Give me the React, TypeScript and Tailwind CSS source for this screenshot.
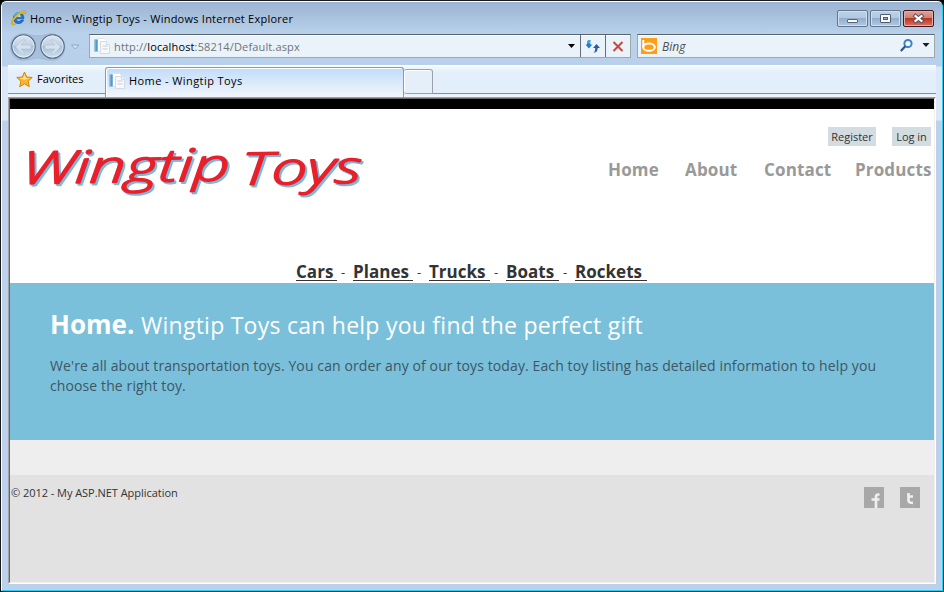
import React from "react";

const font = "font-['Open_Sans','Noto_Sans',sans-serif]";

function IeLogo() {
  return (
    <svg width="18" height="17" viewBox="0 0 18 17" className="shrink-0">
      <path d="M13.8 9.8H6.2c.2 3 3.6 3.5 4.8 1.3h2.7c-2.2 5.5-10.300 4.500-10.300-2.100 0-7.200 11.200-7.500 10.400.8z" fill="#1c79cd" stroke="#0d4f9d" strokeWidth=".6" />
      <path d="M6.300 7.700c.5-2.700 4.100-2.700 4.600 0z" fill="#e8f5ff" />
      <path d="M4.200 7.500C5 4 9 3 11.500 4.500" fill="none" stroke="#53bdf2" strokeWidth="1.400" />
      <path d="M1.800 15.500C-.6 13 5 5.500 11 2.700c3-1.400 5-1.200 5 .5 0 .8-.3 1.400-.7 2 .1-1.500-1.100-1.900-3.500-.7C7 7 2.300 12.200 2.800 14.500c.4 1.300 2.300.5 3.500-.3-1.500 1.500-3.500 2.300-4.500 1.300z" fill="#f6b90c" stroke="#b98208" strokeWidth=".3" />
    </svg>
  );
}

function PageIcon() {
  return (
    <svg width="16" height="16" viewBox="0 0 16 16" className="shrink-0">
      <path d="M3.500.5h7l2 2v11h-9z" fill="#fff" stroke="#dde4ea" />
      <path d="M.5 1.500h3.200v12H.5z" fill="#4e9bd0" />
      <path d="M.5 1.500h1v12h-1z" fill="#91c6e6" />
      <path d="M6.500 3.500h6l3 3v9h-9z" fill="#f6f9fb" stroke="#d3dae1" />
      <path d="M12.500 3.500v3h3" fill="#fff" stroke="#d3dae1" />
      <path d="M8.500 8h5M8.500 11h5" stroke="#c5cdd6" />
    </svg>
  );
}

function NavButtons() {
  return (
    <svg width="70" height="28" viewBox="0 0 70 28" className="shrink-0">
      <defs>
        <linearGradient id="orb" x1="0" y1="0" x2="0" y2="1">
          <stop offset="0" stopColor="#dbe7f3" />
          <stop offset=".48" stopColor="#bdcfe2" />
          <stop offset=".5" stopColor="#a7bfd6" />
          <stop offset="1" stopColor="#cfe3f2" />
        </linearGradient>
      </defs>
      <path d="M13 .7c6 0 9 2.200 14.500 2.200S36 .7 42 .7c17 0 17 26.600 0 26.600-6 0-9-2.200-14.500-2.200S19 27.300 13 27.300c-17 0-17-26.600 0-26.600z" fill="#a9c0dc" stroke="#9bb2ce" strokeWidth=".7" />
      {[13.5, 42.5].map((x) => (
        <g key={x}>
          <circle cx={x} cy="13.500" r="11.700" fill="url(#orb)" stroke="#596b80" strokeWidth="1.200" />
          <circle cx={x} cy="13.500" r="10.600" fill="none" stroke="#e6eff8" strokeWidth=".8" />
        </g>
      ))}
      <path d="M5.500 14l7-7h3l-4.500 5h10v4H11l4.500 5h-3z" fill="#d5e2ee" stroke="#b3c5d6" strokeWidth=".8" />
      <path d="M50.500 14l-7-7h-3l4.500 5H35v4h10l-4.500 5h3z" fill="#d5e2ee" stroke="#b3c5d6" strokeWidth=".8" />
      <path d="M61.500 12h7.400l-3.700 4z" fill="#d3e1f1" stroke="#8da5c0" strokeWidth=".9" />
    </svg>
  );
}

function CaptionButton({ kind }: { kind: "min" | "max" | "close" }) {
  const close = kind === "close";
  return (
    <div
      className={
        close
          ? "h-[17px] w-[31px] rounded-[2px] border border-[#47141e] bg-[linear-gradient(#dda39a_0%,#cf7e70_48%,#b93622_50%,#d77560_100%)] shadow-[inset_0_0_0_1px_#e4aea2]"
          : "h-[17px] w-[31px] rounded-[2px] border border-[#62758f] bg-[linear-gradient(#bdd0e6_0%,#b1c8e0_48%,#91aecd_50%,#b2cbe5_100%)] shadow-[inset_0_0_0_1px_#d1e0f0]"
      }
    >
      <svg width="29" height="15" viewBox="0 0 29 15">
        {kind === "min" && <rect x="9.500" y="8.500" width="10" height="3" rx=".5" fill="#fafafa" stroke="#5c6475" />}
        {kind === "max" && (
          <g stroke="#535b70" fill="#fafafa">
            <rect x="9.500" y="3.500" width="10" height="8" rx=".5" />
            <rect x="12.500" y="6.500" width="4" height="2" fill="#9ab2ce" />
          </g>
        )}
        {close && (
          <g>
            <path d="M11.500 5l6 5M17.500 5l-6 5" stroke="#514b5b" strokeWidth="4" strokeLinecap="square" />
            <path d="M11.500 5l6 5M17.500 5l-6 5" stroke="#fff" strokeWidth="2.200" strokeLinecap="square" />
          </g>
        )}
      </svg>
    </div>
  );
}

function TitleBar() {
  return (
    <div className="flex h-[31px] items-start pl-[8px] pr-[8px] pt-[7px]">
      <IeLogo />
      <span className="ml-[2px] w-[270px] whitespace-nowrap text-[11px] leading-[20px] tracking-[0.24px] text-black">
        Home - Wingtip Toys - Windows Internet Explorer
      </span>
      <div className="ml-auto flex gap-[2px] pt-px">
        <CaptionButton kind="min" />
        <CaptionButton kind="max" />
        <CaptionButton kind="close" />
      </div>
    </div>
  );
}

const fieldClass = "flex h-[24px] items-center border border-[#99aaa9] border-t-[#56646e] bg-[#eaf2fa] shadow-[inset_0_1px_0_#fff]";

function AddressRow() {
  return (
    <div className="flex h-[32px] items-start pl-[8px] pr-[7px]">
      <NavButtons />
      <div className={fieldClass + " ml-[9px] mt-px w-[542px] pl-[4px]"}>
        <PageIcon />
        <span className="ml-[4px] pt-[2px] text-[11px] leading-[20px] tracking-[0.14px] text-[#6f7479]">
          http://<span className="text-black">localhost</span>:58214/Default.aspx
        </span>
        <svg width="58" height="22" viewBox="0 0 58 22" className="ml-auto mr-[4px]">
          <path d="M0 9h7l-3.500 4z" fill="#000" />
          <path d="M12.500 0v22M37.500 0v22" stroke="#666b79" />
          <path d="M22.500 5c-3.500 0-3.500 2-3.500 4.500h-1.500l3.400 4 3.400-4h-2c0-2-.3-3.300.2-4.500z" fill="#2477cb" />
          <path d="M28.500 9l-3.500 4h2.200c0 2-.2 3.500-1.700 4.700 3.400-.2 4.100-2 4.100-4.700H32z" fill="#265cab" />
          <path d="M22.500 5c-3.500 0-3.500 2-3.500 3.500h3.100c0-1.500 0-2.500.4-3.500z" fill="#38b0df" />
          <path d="M45.500 7l9 9M54.500 7l-9 9" stroke="#cc4440" strokeWidth="2" />
        </svg>
      </div>
      <div className={fieldClass + " ml-auto mt-px w-[298px] pl-[3px]"}>
        <svg width="16" height="16" viewBox="0 0 16 16">
          <rect width="16" height="16" fill="#ff9d16" />
          <path d="M2.300 2v7.500" stroke="#fff" strokeWidth="2" />
          <ellipse cx="8" cy="9.200" rx="5.800" ry="3.600" fill="none" stroke="#fff" strokeWidth="2" />
        </svg>
        <span className="ml-[5px] pt-[2px] text-[12px] italic text-[#4c5158]">Bing</span>
        <svg width="33" height="16" viewBox="0 0 33 16" className="ml-auto mr-[2px]">
          <circle cx="9" cy="5.500" r="3.600" fill="#f3faff" stroke="#3a82c8" strokeWidth="2" />
          <path d="M6.300 8.300l-4.500 4.700" stroke="#344f8d" strokeWidth="2.200" />
          <path d="M23.500 5h7L27 9z" fill="#1c1c1c" />
        </svg>
      </div>
    </div>
  );
}

function TabRow() {
  return (
    <div className="ml-[6px] mr-[6px] flex h-[32px] border-t border-[#fff] bg-[linear-gradient(#f3f9ff_0,#e2eefa_7px,#e2eefa_28px,#eff4f9_29px)]">
      <div className="flex h-[28px] w-[97px] border-b border-[#8792a1] pl-[8px] pt-[5px]">
        <svg width="17" height="17" viewBox="0 0 17 17">
          <path d="M8.500 1l2.200 5 5.500.500-4.100 3.700 1.200 5.500-4.800-2.900-4.800 2.900 1.200-5.500L.8 6.500 6.300 6z" fill="#ffb52a" stroke="#d48511" strokeLinejoin="round" />
          <path d="M8.500 3.500L9.900 7l3.300.3-4.700 1.500-4.700-1.500L7.100 7z" fill="#ffe58a" />
        </svg>
        <span className="ml-[4px] text-[11px] leading-[16px] text-black">Favorites</span>
      </div>
      <div className="mt-[1px] flex h-[30px] w-[299px] rounded-t-[3px] border border-b-0 border-[#9298a3] bg-[linear-gradient(#c1dcf9,#f2f6fc)] pl-[3px] pt-[5px] shadow-[inset_1px_1px_0_#fff]">
        <PageIcon />
        <span className="ml-[4px] text-[11px] leading-[16px] tracking-[0.42px] text-black">Home - Wingtip Toys</span>
      </div>
      <div className="mt-[3px] h-[25px] w-[29px] rounded-t-[3px] rounded-bl-[3px] border border-l-0 border-[#9aa1aa] bg-[#e4effa] shadow-[inset_1px_1px_0_#fff]" />
      <div className="h-[28px] flex-1 border-b border-[#8792a1]" />
    </div>
  );
}

function Logo() {
  return (
    <svg
      width="370"
      height="90"
      viewBox="0 0 370 90"
      className="font-['Open_Sans',sans-serif] text-[45px] font-light italic drop-shadow-[2px_2px_0_#7cb7dc]"
      fill="#e9202b"
      stroke="#e9202b"
      strokeWidth="1.600"
      strokeLinejoin="round"
      strokeLinecap="round"
    >
      <text transform="translate(11 54) rotate(-1) skewX(-4)" textLength="208" lengthAdjust="spacingAndGlyphs">
        Wingtip
      </text>
      <text transform="translate(230 55) rotate(-1) skewX(-4)" textLength="121" lengthAdjust="spacingAndGlyphs">
        Toys
      </text>
    </svg>
  );
}

function CategoryLink({ name, width }: { name: string; width: string }) {
  return (
    <span className={"h-[19px] border-b border-[#333] text-[17px] font-bold leading-[20px] tracking-[0.02px] " + width}>{name}</span>
  );
}

function Dash() {
  return <span className="w-[16px] pl-[4px] text-[13px] leading-[21px]">-</span>;
}

function Header() {
  return (
    <header className="flex h-[184px] flex-col border-t-[10px] border-black bg-white">
      <div className="flex h-[148px] shrink-0 justify-between">
        <div className="pt-[21px]">
          <Logo />
        </div>
        <div className="pr-[3px] pt-[18px]">
          <div className="flex justify-end gap-[16px] text-[11px] leading-[19px] text-[#333]">
            <span className="h-[19px] w-[48px] bg-[#d3dce0] text-center">Register</span>
            <span className="h-[19px] w-[39px] bg-[#d3dce0] text-center">Log in</span>
          </div>
          <nav className="mt-[12px] flex whitespace-nowrap text-[17px] font-bold leading-[24px] tracking-[0.15px] text-[#999]">
            <span className="w-[77px]">Home</span>
            <span className="w-[79px]">About</span>
            <span className="w-[91px]">Contact</span>
            <span className="w-[76px]">Products</span>
          </nav>
        </div>
      </div>
      <div className="flex h-[26px] items-start pl-[286px] pt-[5px] text-[#333]">
        <CategoryLink name="Cars" width="w-[41px]" />
        <Dash />
        <CategoryLink name="Planes" width="w-[60px]" />
        <Dash />
        <CategoryLink name="Trucks" width="w-[61px]" />
        <Dash />
        <CategoryLink name="Boats" width="w-[53px]" />
        <Dash />
        <CategoryLink name="Rockets" width="w-[72px]" />
      </div>
    </header>
  );
}

function Hero() {
  return (
    <section className="h-[157px] bg-[#7ac0da] pl-[40px] pt-[24px]">
      <h1 className="flex h-[35px] items-baseline whitespace-nowrap text-white">
        <span className="w-[91px] text-[26px] font-bold leading-[35px]">Home.</span>
        <span className="text-[23px] tracking-[0.25px]">Wingtip Toys can help you find the perfect gift</span>
      </h1>
      <p className="mt-[14px] whitespace-nowrap text-[14px] leading-[20px] tracking-[0.11px] text-[#3e5667]">
        We're all about transportation toys. You can order any of our toys today. Each toy listing has detailed information to help you
        <br />
        choose the right toy.
      </p>
    </section>
  );
}

function Footer() {
  return (
    <footer className="flex h-[107px] justify-between bg-[#e2e2e2] pr-[14px] pt-[10px]">
      <span className="pl-px text-[11px] leading-[16px] tracking-[-0.04px] text-[#333]">© 2012 - My ASP.NET Application</span>
      <div className="flex gap-[16px] pt-[2px]">
        <svg width="20" height="21" viewBox="0 0 20 21">
          <rect width="20" height="21" fill="#a8a8a8" />
          <path d="M15.500 7.500h-1.200c-2 0-2.300 1-2.300 2.500V21M7.500 12.500h8" fill="none" stroke="#efefef" strokeWidth="2.700" />
        </svg>
        <svg width="20" height="21" viewBox="0 0 20 21">
          <rect width="20" height="21" fill="#a8a8a8" />
          <path d="M8.500 6v7.500c0 2 1 2.300 4.500 2.300M8.500 9.500H13" fill="none" stroke="#efefef" strokeWidth="2.700" />
        </svg>
      </div>
    </footer>
  );
}

export default function App() {
  return (
    <div className={"h-[592px] w-[944px] overflow-hidden bg-black " + font}>
      <div className="flex h-[592px] w-[944px] flex-col overflow-hidden rounded-t-[6px] border border-[#16181c] bg-black">
        <div className="flex h-[590px] flex-col rounded-t-[5px] border border-b-[#27d3f1] border-l-white border-r-[#27d3f1] border-t-white bg-[linear-gradient(#9ab4d2_0,#b9d1ea_32px,#b9d0eb_64px,#dce8f7_65px,#dce8f7_118px,#bcd1eb_119px)]">
          <TitleBar />
          <AddressRow />
          <TabRow />
          <main className="ml-[6px] mr-[6px] h-[487px] border-b border-l border-r border-t border-b-white border-l-[#a3a3a8] border-r-white border-t-[#9c9da3]">
            <div className="h-[485px] border-b border-l border-r border-t border-b-[#f2eeeb] border-l-[#66666b] border-r-[#f2eeeb] border-t-[#66666b]">
              <Header />
              <Hero />
              <div className="h-[35px] bg-[#eee]" />
              <Footer />
            </div>
          </main>
        </div>
      </div>
    </div>
  );
}
